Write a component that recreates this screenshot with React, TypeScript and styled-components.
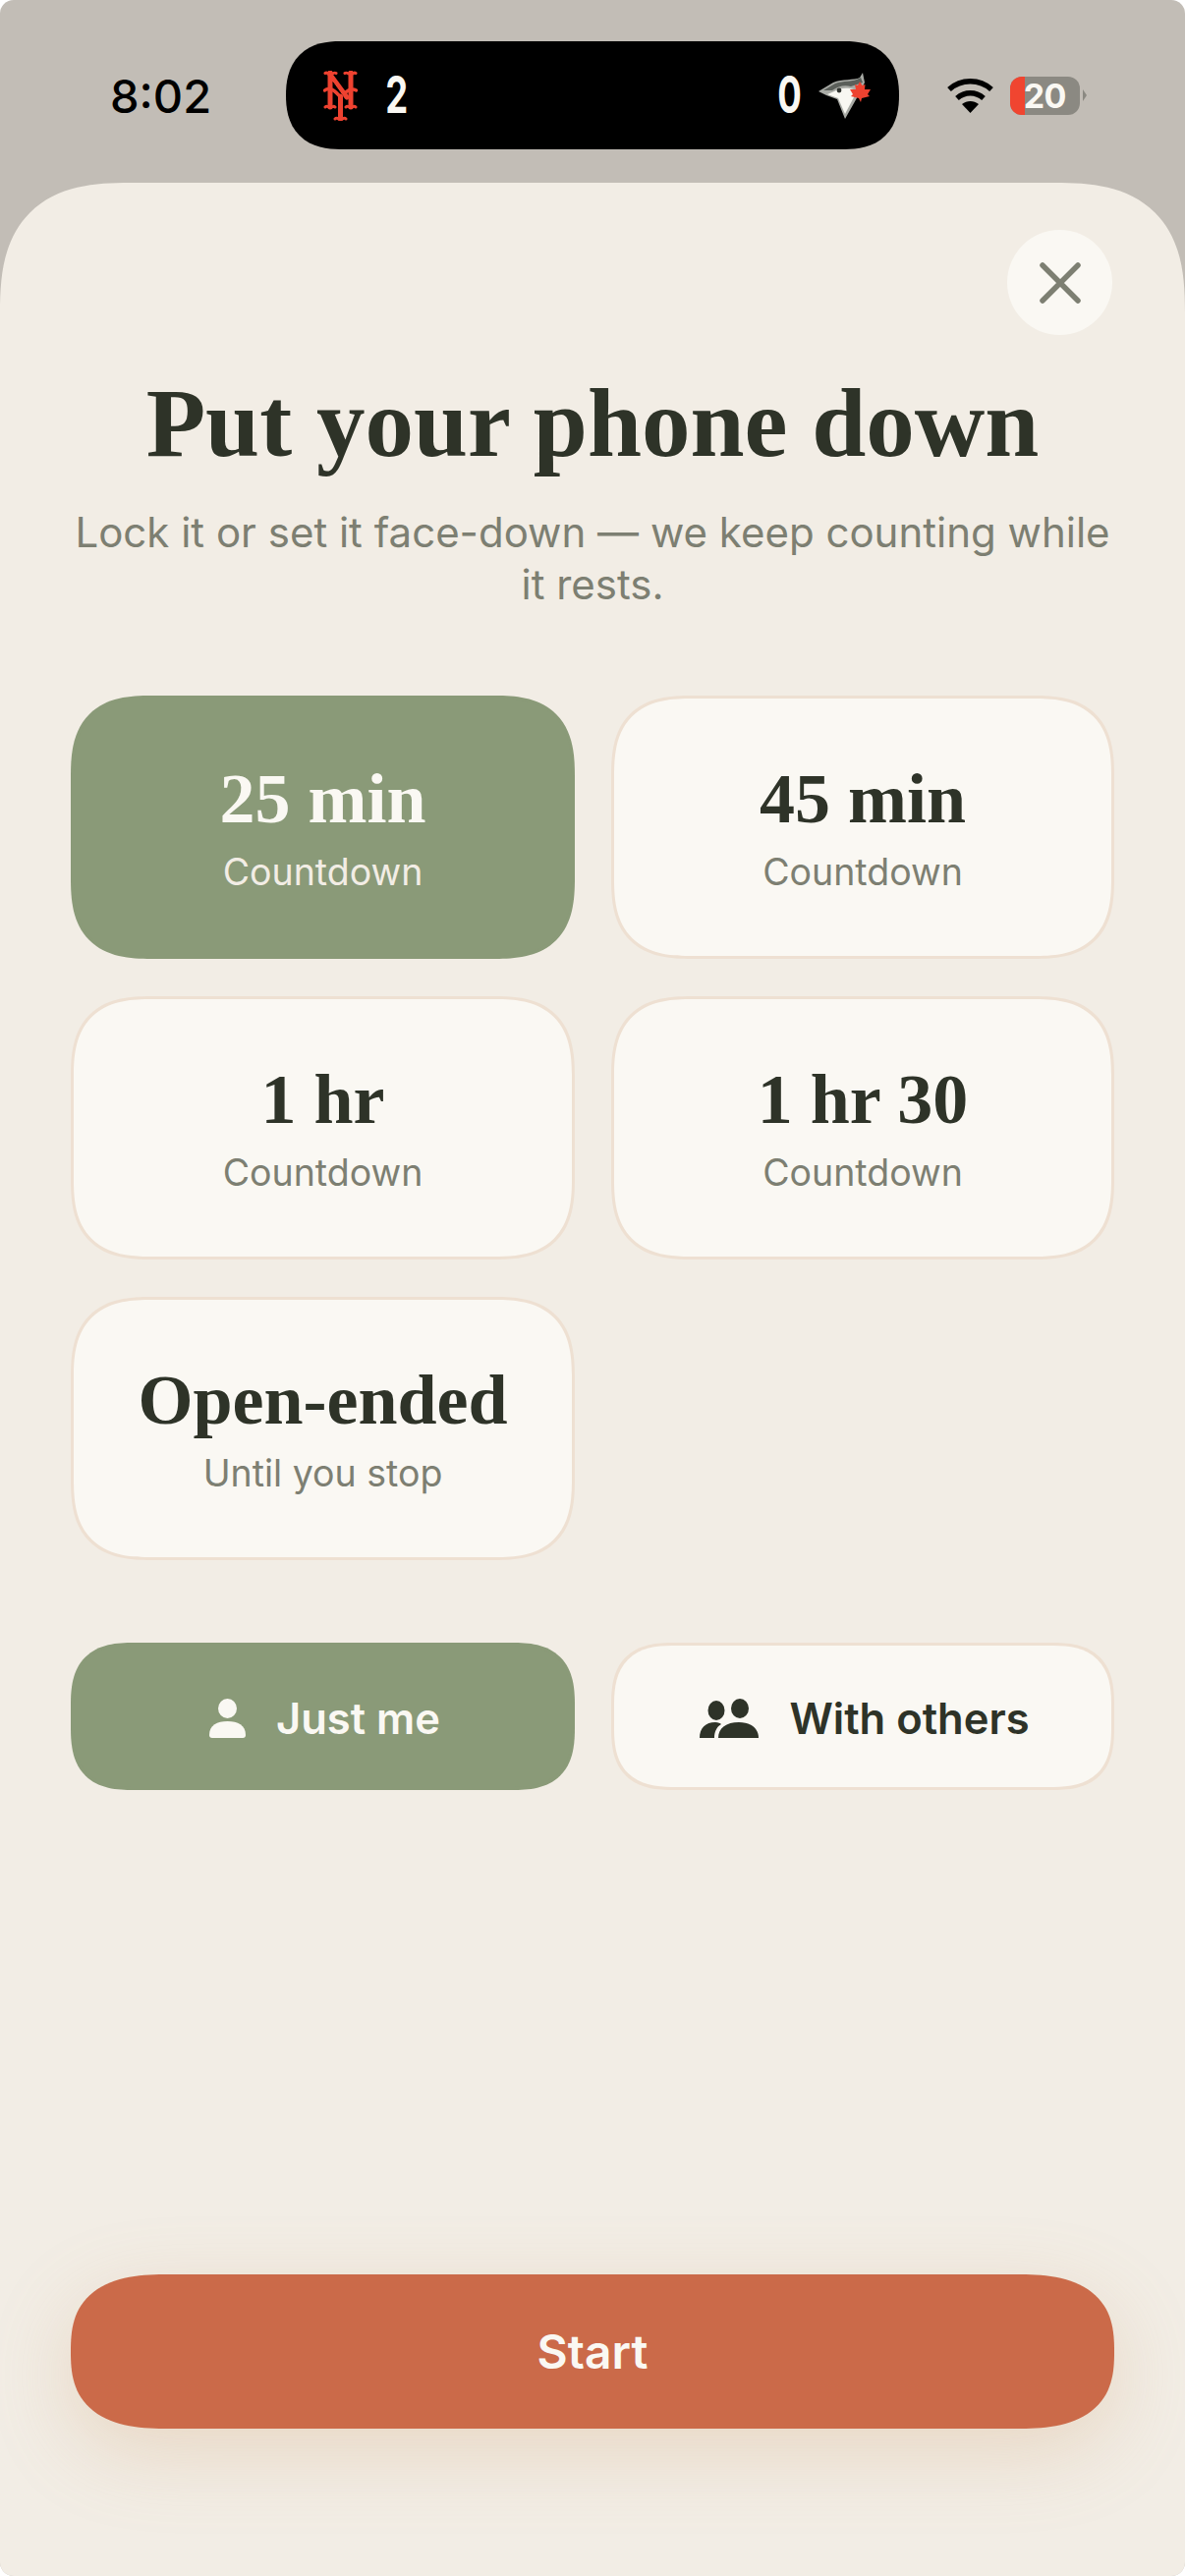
import React from "react";
import styled, { createGlobalStyle } from "styled-components";

const GlobalStyle = createGlobalStyle`
  html, body {
    margin: 0;
    padding: 0;
    background: #fff;
  }
  * {
    box-sizing: border-box;
  }
`;

const UI_FONT = `Inter, "Liberation Sans", sans-serif`;
const SERIF_FONT = `"Liberation Serif", "Noto Serif", serif`;

const durations = [
  { title: "25 min", sub: "Countdown", active: true },
  { title: "45 min", sub: "Countdown" },
  { title: "1 hr", sub: "Countdown" },
  { title: "1 hr 30", sub: "Countdown" },
  { title: "Open-ended", sub: "Until you stop" },
];

const MetsLogo = () => (
  <svg width="35" height="51" viewBox="0 0 35 51" fill="none" stroke="#ee4230" strokeLinecap="round">
    <path d="M7 2V37M28 2V37" strokeWidth="5" />
    <path d="M2 2.5C4 1 5 4 7 3C9 4 11 1 13 2.5M22 2.5C24 1 26 4 28 3C30 4 31 1 33 2.5" strokeWidth="3" />
    <path d="M2 37C4 35 6 38 7 37C9 38 10 35 12 37M23 37C25 35 27 38 28 37C29 38 31 35 33 37" strokeWidth="3" />
    <path d="M7 4L24 27" strokeWidth="5" />
    <path d="M1.5 20C6 16 12 20 17.5 27C23 21 28 17 33.5 20" strokeWidth="3.4" />
    <path d="M10 12L20 26" stroke="#000" strokeWidth="1" />
    <path d="M17.5 26V49" strokeWidth="5" />
    <path d="M12 49C14 47 16 50 17.5 49C19 50 21 47 23 49" strokeWidth="3" />
  </svg>
);

const JaysLogo = () => (
  <svg width="54" height="47" viewBox="0 0 54 47">
    <path d="M0 19L15 10C24 6 36 8 42 5L45 0L47 10L40 24L27 47L19 27L8 23Z" fill="#a9aba6" />
    <path d="M5 18L17 11C25 8 35 10 43 5L45 10L33 14C26 12 20 14 14 18Z" fill="#5b5f5a" />
    <path d="M9 22L16 19C22 15 30 15 36 17L36 25L27 42L20 26Z" fill="#f8f7f2" />
    <circle cx="21" cy="18" r="2.4" fill="#30332f" />
    <path d="M42 9L44.5 13L47.5 12L47 17L53 17L50 22L52 24L44 26L43 30L41 26L33 24L35 22L32 17L38 17L37 12L40 13Z" fill="#ee4230" />
  </svg>
);

const WifiIcon = () => (
  <svg width="47" height="35" viewBox="0 0 47 35" fill="none" stroke="#000" strokeWidth="5.5">
    <path d="M2 11C14 0 33 0 45 11" />
    <path d="M10 20C18 13 29 13 37 20" />
    <path d="M23.5 35L15 26C20 22 27 22 32 26Z" fill="#000" stroke="none" />
  </svg>
);

const PersonIcon = () => (
  <svg width="37" height="40" viewBox="0 0 37 40" fill="#faf8f3">
    <ellipse cx="18.5" cy="10" rx="9.5" ry="10" />
    <path d="M0 37C0 27 8 23 18.5 23C29 23 37 27 37 37C37 39 36 40 34 40H3C1 40 0 39 0 37Z" />
  </svg>
);

const PeopleIcon = () => (
  <svg width="60" height="40" viewBox="0 0 60 40" fill="#2e3328">
    <ellipse cx="17" cy="12" rx="8.5" ry="10" />
    <ellipse cx="41" cy="10" rx="9" ry="10" />
    <path d="M0 40C0 30 6 24 16 24C19 24 21 25 22 26C17 29 15 34 15 40Z" />
    <path d="M19 40C19 30 27 24 40 24C52 24 60 30 60 40Z" />
  </svg>
);

const CloseIcon = () => (
  <svg width="42" height="42" viewBox="0 0 42 42" fill="none" stroke="#7d7f72" strokeWidth="5.5" strokeLinecap="round">
    <path d="M3 3L39 39M39 3L3 39" />
  </svg>
);

export default function App() {
  return (
    <Screen>
      <GlobalStyle />
      <StatusBar>
        <Time>8:02</Time>
        <Island>
          <TeamScore>
            <MetsLogo />
            <Score>2</Score>
          </TeamScore>
          <TeamScore $gap={24}>
            <Score>0</Score>
            <JaysLogo />
          </TeamScore>
        </Island>
        <StatusIcons>
          <WifiIcon />
          <Battery>
            <BatteryLevel />
            <BatteryText>20</BatteryText>
          </Battery>
          <BatteryNub />
        </StatusIcons>
      </StatusBar>

      <Sheet>
        <CloseButton aria-label="Close">
          <CloseIcon />
        </CloseButton>
        <Title>Put your phone down</Title>
        <Subtitle>Lock it or set it face-down — we keep counting while it rests.</Subtitle>

        <DurationGrid>
          {durations.map((d) => (
            <DurationCard key={d.title} $active={d.active}>
              <CardTitle>{d.title}</CardTitle>
              <CardSub $active={d.active}>{d.sub}</CardSub>
            </DurationCard>
          ))}
        </DurationGrid>

        <ModeRow>
          <ModeButton $active>
            <PersonIcon />
            Just me
          </ModeButton>
          <ModeButton>
            <PeopleIcon />
            With others
          </ModeButton>
        </ModeRow>

        <StartButton>Start</StartButton>
      </Sheet>
    </Screen>
  );
}

const Screen = styled.div`
  width: 1206px;
  height: 2622px;
  display: flex;
  flex-direction: column;
  overflow: hidden;
  background: #c2bdb6;
  border-radius: 14px;
  font-family: ${UI_FONT};
`;

const StatusBar = styled.header`
  height: 186px;
  flex: none;
  display: flex;
  align-items: center;
  padding: 8px 0 0 112px;
`;

const Time = styled.div`
  width: 179px;
  font-size: 47px;
  font-weight: 500;
  color: #000;
`;

const Island = styled.div`
  width: 624px;
  height: 110px;
  border-radius: 55px;
  corner-shape: superellipse(1.25);
  background: #000;
  display: flex;
  align-items: center;
  justify-content: space-between;
  padding: 0 28px 0 38px;
`;

const TeamScore = styled.div<{ $gap?: number }>`
  display: flex;
  align-items: center;
  gap: ${({ $gap }) => $gap ?? 25}px;
`;

const Score = styled.span`
  display: inline-block;
  width: 21px;
  font-size: 52px;
  line-height: 52px;
  font-weight: 700;
  color: #faf8f3;
  text-align: center;
  transform: scaleX(0.7);
`;

const StatusIcons = styled.div`
  display: flex;
  align-items: center;
  margin-left: 49px;
`;

const Battery = styled.div`
  position: relative;
  width: 71px;
  height: 39px;
  margin-left: 17px;
  border-radius: 12px;
  overflow: hidden;
  background: #8b8982;
  display: flex;
  align-items: center;
  justify-content: flex-end;
  padding-right: 14px;
`;

const BatteryLevel = styled.div`
  position: absolute;
  left: 0;
  top: 0;
  bottom: 0;
  width: 15px;
  background: #f04530;
`;

const BatteryText = styled.span`
  position: relative;
  font-size: 34px;
  line-height: 39px;
  font-weight: 700;
  color: #faf8f3;
  letter-spacing: -0.5px;
`;

const BatteryNub = styled.div`
  width: 0;
  height: 0;
  margin-left: 3px;
  border-top: 6px solid transparent;
  border-bottom: 6px solid transparent;
  border-left: 4px solid #8b8982;
`;

const Sheet = styled.main`
  flex: 1;
  display: flex;
  flex-direction: column;
  padding: 48px 72px 150px;
  background: #f2ede5;
  border-radius: 132px 132px 0 0;
  corner-shape: superellipse(1.4);
`;

const CloseButton = styled.button`
  align-self: flex-end;
  width: 107px;
  height: 107px;
  margin-right: 2px;
  border: 0;
  padding: 0;
  border-radius: 50%;
  background: #faf8f3;
  display: flex;
  align-items: center;
  justify-content: center;
`;

const Title = styled.h1`
  margin: 40px 0 0;
  font-family: ${SERIF_FONT};
  font-size: 99px;
  line-height: 100px;
  font-weight: 700;
  color: #2e3328;
  text-align: center;
  white-space: nowrap;
`;

const Subtitle = styled.p`
  margin: 34px 0 0;
  font-size: 42px;
  line-height: 53px;
  font-weight: 400;
  color: #7d7f72;
  text-align: center;
`;

const DurationGrid = styled.div`
  display: grid;
  grid-template-columns: 513px 512px;
  grid-auto-rows: 268px;
  gap: 38px 37px;
  margin-top: 87px;
`;

const DurationCard = styled.div<{ $active?: boolean }>`
  display: flex;
  flex-direction: column;
  align-items: center;
  justify-content: center;
  border-radius: 82px;
  corner-shape: superellipse(1.4);
  border: 3px solid ${({ $active }) => ($active ? "#8a9a78" : "#eee0d2")};
  background: ${({ $active }) => ($active ? "#8a9a78" : "#faf8f3")};
  color: ${({ $active }) => ($active ? "#faf8f3" : "#2e3328")};
`;

const CardTitle = styled.div`
  font-family: ${SERIF_FONT};
  font-size: 72px;
  line-height: 78px;
  font-weight: 700;
`;

const CardSub = styled.div<{ $active?: boolean }>`
  margin-top: 14px;
  font-size: 37.5px;
  line-height: 44px;
  color: ${({ $active }) => ($active ? "#f2ede5" : "#7d7f72")};
`;

const ModeRow = styled.div`
  display: grid;
  grid-template-columns: 513px 512px;
  gap: 37px;
  margin-top: 84px;
`;

const ModeButton = styled.button<{ $active?: boolean }>`
  height: 150px;
  display: flex;
  align-items: center;
  justify-content: center;
  gap: 31px;
  padding: 3px 0 0 4px;
  border-radius: 64px;
  corner-shape: superellipse(1.4);
  border: 3px solid ${({ $active }) => ($active ? "#8a9a78" : "#eee0d2")};
  background: ${({ $active }) => ($active ? "#8a9a78" : "#faf8f3")};
  color: ${({ $active }) => ($active ? "#faf8f3" : "#2e3328")};
  font-family: ${UI_FONT};
  font-size: 43.5px;
  font-weight: 600;
`;

const StartButton = styled.button`
  margin-top: auto;
  height: 157px;
  border: 0;
  padding: 0;
  border-radius: 100px / 78px;
  corner-shape: superellipse(1.4);
  background: #cb6a49;
  color: #faf8f3;
  font-family: ${UI_FONT};
  font-size: 48px;
  font-weight: 600;
  box-shadow: 0 24px 80px rgba(203, 150, 100, 0.25);
`;
